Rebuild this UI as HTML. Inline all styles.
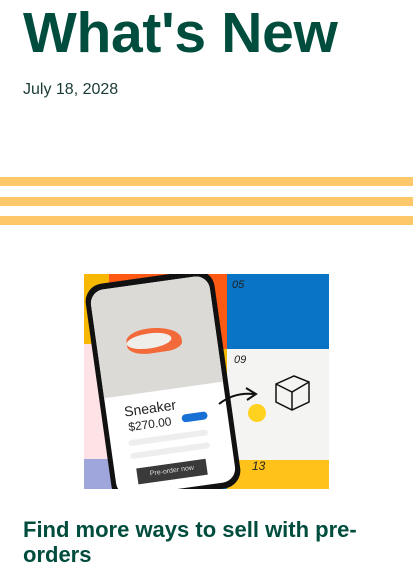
<!DOCTYPE html>
<html><head><meta charset="utf-8"><style>
body{margin:0;width:413px;height:575px;overflow:hidden;background:#fff;font-family:"Liberation Sans",sans-serif;color:#0a4a3c;position:relative}
.t{position:absolute;left:23px;top:0px;font-size:57px;font-weight:bold;color:#004d3d;white-space:nowrap;letter-spacing:-0.3px}
.d{position:absolute;left:23px;top:81px;font-size:16px;color:#1a3b35}
.s{position:absolute;left:0;width:413px;height:9px;background:#fdc76a}
.img{position:absolute;left:84px;top:274px;width:245px;height:215px;overflow:hidden;background:#f6f6f4}
.b{position:absolute}
h2{position:absolute;left:23px;top:517px;margin:0;font-size:22px;line-height:25px;color:#004d3d;width:370px}
</style></head><body>
<div class="t">What's New</div>
<div class="d">July 18, 2028</div>
<div class="s" style="top:177px"></div>
<div class="s" style="top:197px"></div>
<div class="s" style="top:216px"></div>
<div class="img">
<div class="b" style="left:0;top:0;width:30px;height:70px;background:#f8b700"></div>
<div class="b" style="left:25px;top:0;width:120px;height:75px;background:#ff5a14"></div>
<div class="b" style="left:143px;top:0;width:102px;height:75px;background:#0a74c4"></div>
<div class="b" style="left:0;top:70px;width:30px;height:115px;background:#fde2e6"></div>
<div class="b" style="left:0;top:185px;width:30px;height:30px;background:#9fa6dc"></div>
<div class="b" style="left:30px;top:185px;width:113px;height:30px;background:#0a74c4"></div>
<div class="b" style="left:143px;top:76px;width:102px;height:110px;background:#f4f4f2"></div>
<div class="b" style="left:143px;top:186px;width:102px;height:29px;background:#ffc21a"></div>
<div class="b" style="left:30px;top:75px;width:113px;height:110px;background:#f8b700"></div>
<div class="b" style="left:14px;top:2px;width:130px;height:220px;background:#111;border-radius:18px;transform:rotate(-8deg);transform-origin:center"></div>
<div class="b" style="left:19px;top:8px;width:120px;height:208px;background:#fff;border-radius:14px;transform:rotate(-8deg);overflow:hidden">
 <div style="height:108px;background:#dcdad7"></div>
 <div style="position:absolute;left:30px;top:45px;width:55px;height:25px;background:#f26a3a;border-radius:40% 60% 30% 40%"></div>
 <div style="position:absolute;left:30px;top:50px;width:45px;height:15px;background:#f0eeea;border-radius:50%"></div>
 <div style="position:absolute;left:18px;top:116px;font-size:14px;color:#222">Sneaker</div>
 <div style="position:absolute;left:20px;top:133px;font-size:12px;color:#222">$270.00</div>
 <div style="position:absolute;left:74px;top:135px;width:26px;height:8px;background:#1870d5;border-radius:4px"></div>
 <div style="position:absolute;left:18px;top:153px;width:80px;height:6px;background:#eee;border-radius:3px"></div>
 <div style="position:absolute;left:18px;top:166px;width:80px;height:6px;background:#eee;border-radius:3px"></div>
 <div style="position:absolute;left:22px;top:182px;width:70px;height:16px;background:#3a3a3a;color:#ddd;font-size:7px;text-align:center;line-height:16px">Pre-order now</div>
</div>
<div class="b" style="left:148px;top:5px;font-size:11px;font-style:italic;color:#222">05</div>
<div class="b" style="left:150px;top:80px;font-size:11px;font-style:italic;color:#222">09</div>
<div class="b" style="left:168px;top:185px;font-size:12px;font-style:italic;color:#222">13</div>
<svg class="b" style="left:130px;top:90px" width="110" height="60"><path d="M5 40 Q20 28 40 30 M32 24 L42 30 L33 36" stroke="#111" stroke-width="2" fill="none"/><path d="M62 20 L80 12 L95 18 L95 38 L78 46 L62 38Z M62 20 L78 28 L95 18 M78 28 L78 46" stroke="#111" stroke-width="1.5" fill="none"/></svg>
<div class="b" style="left:164px;top:130px;width:18px;height:18px;border-radius:50%;background:#ffd21f"></div>
</div>
<h2>Find more ways to sell with pre-orders</h2>
</body></html>
